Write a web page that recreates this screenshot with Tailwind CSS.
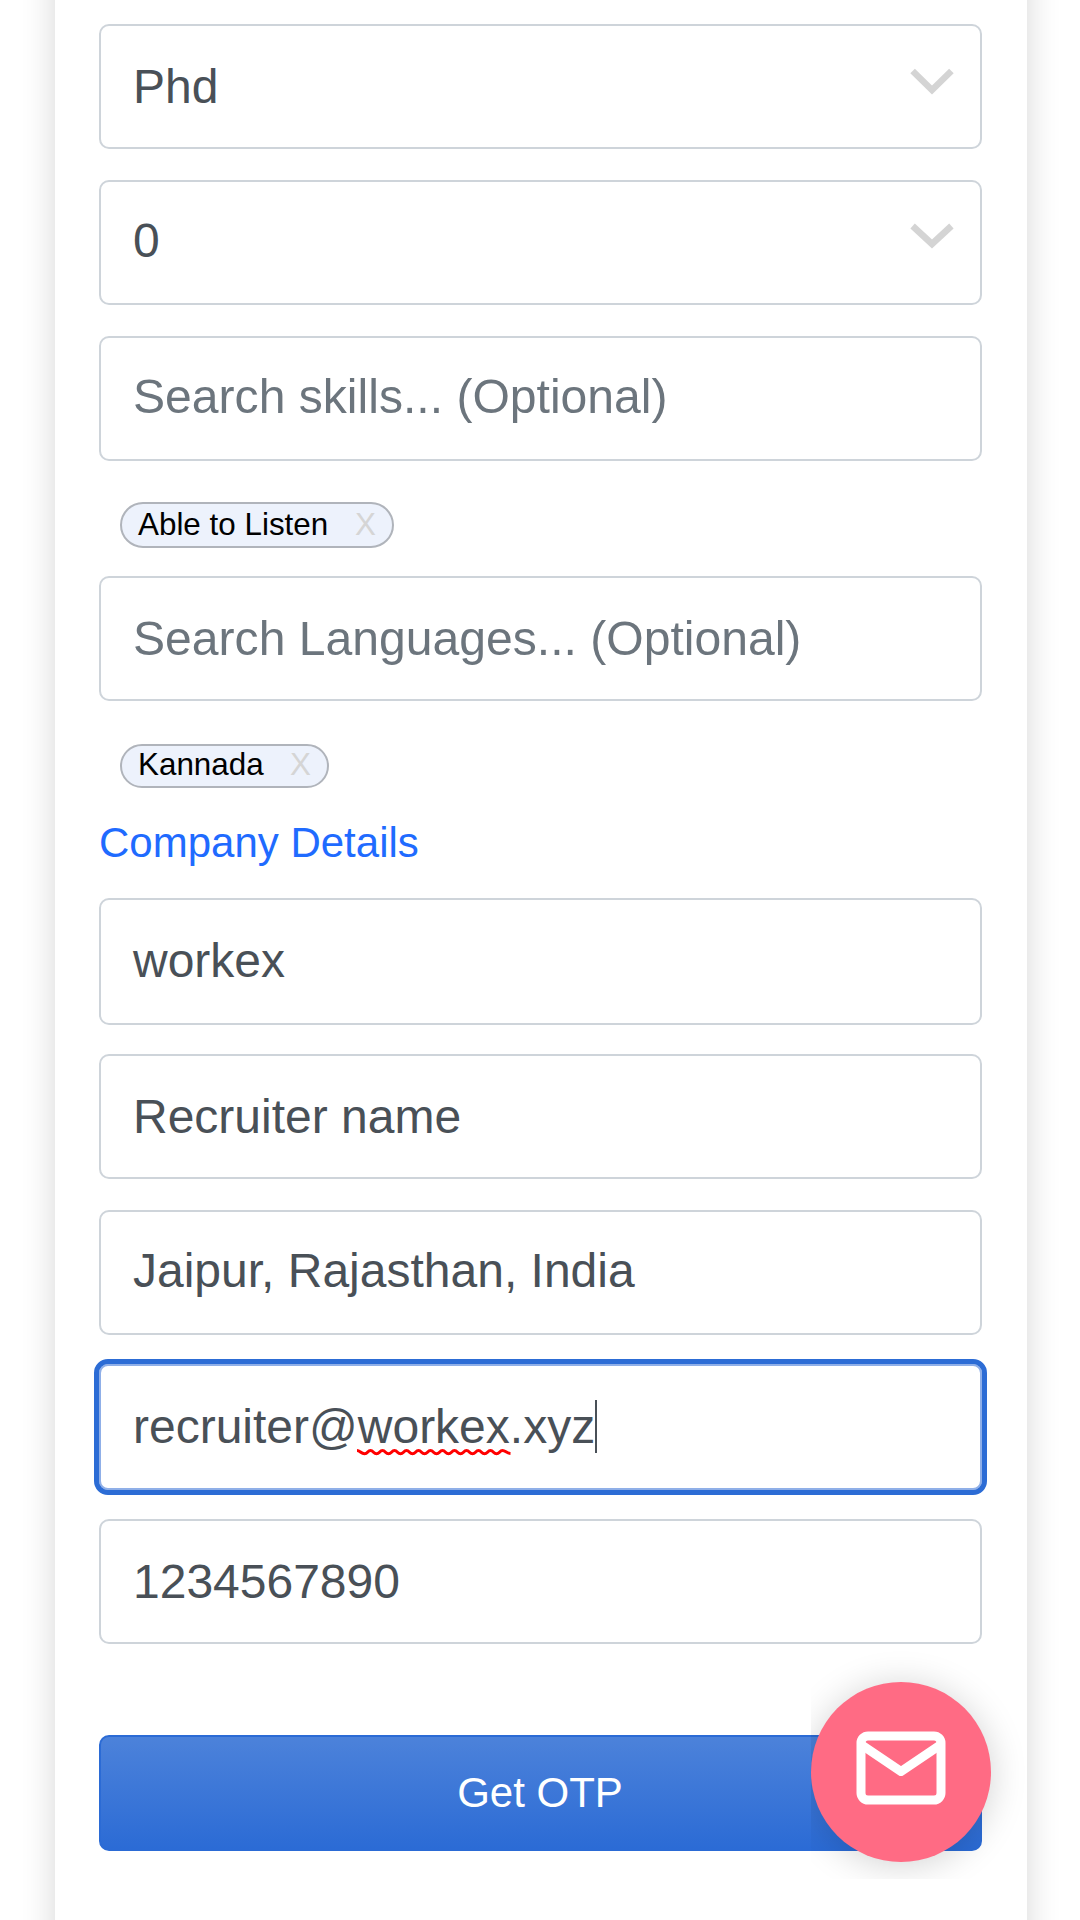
<!DOCTYPE html>
<html lang="en">
<head>
<meta charset="utf-8">
<title>Company Details</title>
<script src="https://cdn.jsdelivr.net/npm/@tailwindcss/browser@4"></script>
</head>
<body class="bg-white">
<div class="relative w-[1080px] h-[1920px] overflow-hidden bg-white font-['Liberation_Sans',Arial,sans-serif]">
  <main class="flex flex-col h-[2040px] -mt-[60px] ml-[55px] w-[972px] pt-[84px] pl-[43.5px] pr-[45.5px] bg-white shadow-[0_0_32px_rgba(0,0,0,0.16)]">
    <!-- Candidate details -->
    <div class="flex shrink-0 items-center justify-between h-[125px] pl-[32.5px] pr-[26px] border-2 border-[#ced4da] rounded-[10px] text-[48px] leading-none text-[#495057]">
      <span>Phd</span>
      <svg class="w-[44px] h-[28px] -mt-3" viewBox="0 0 44 28" fill="none" stroke="#d4d4d4" stroke-width="6.5"><path d="M2.6 4 L22 23 L41.4 4"/></svg>
    </div>
    <div class="flex shrink-0 items-center justify-between h-[125px] mt-[31px] pl-[32.5px] pr-[26px] pb-1 border-2 border-[#ced4da] rounded-[10px] text-[48px] leading-none text-[#495057]">
      <span>0</span>
      <svg class="w-[44px] h-[28px] -mt-2.5" viewBox="0 0 44 28" fill="none" stroke="#d4d4d4" stroke-width="6.5"><path d="M2.6 4 L22 22 L41.4 4"/></svg>
    </div>
    <div class="flex shrink-0 items-center h-[125px] mt-[31px] pl-[32.5px] pb-1 border-2 border-[#ced4da] rounded-[10px] text-[48.1px] leading-none text-[#6c757d]">Search skills... (Optional)</div>
    <div class="flex shrink-0 self-start items-center justify-between w-[273.5px] h-[45.5px] mt-[41px] ml-[21.5px] pl-[16px] pr-[15.5px] border-2 border-[#b0b4bb] rounded-full bg-[#edf2fc] text-[31.4px] leading-none text-black"><span>Able to Listen</span><span class="text-[#d5d5d5]">X</span></div>
    <div class="flex shrink-0 items-center h-[125px] mt-[28.5px] pl-[32.5px] border-2 border-[#ced4da] rounded-[10px] text-[48.1px] leading-none text-[#6c757d]">Search Languages... (Optional)</div>
    <div class="flex shrink-0 self-start items-center justify-between w-[208.5px] h-[43.5px] mt-[43px] ml-[21.5px] pl-[16px] pr-[15.5px] pb-0.5 border-2 border-[#b0b4bb] rounded-full bg-[#edf2fc] text-[31.4px] leading-none text-black"><span>Kannada</span><span class="text-[#d5d5d5]">X</span></div>

    <!-- Company details -->
    <h2 class="shrink-0 h-[63px] mt-[10.5px] mb-[37px] pl-[0.5px] text-[42px] leading-[90px] text-[#1f6bff]">Company Details</h2>
    <div class="flex shrink-0 items-center h-[127px] pl-[32.5px] pb-0.5 border-2 border-[#ced4da] rounded-[10px] text-[48px] leading-none text-[#495057]">workex</div>
    <div class="flex shrink-0 items-center h-[125px] mt-[29px] pl-[32.5px] border-2 border-[#ced4da] rounded-[10px] text-[48px] leading-none text-[#495057]">Recruiter name</div>
    <div class="flex shrink-0 items-center h-[125px] mt-[31px] pl-[32.5px] pb-1 border-2 border-[#ced4da] rounded-[10px] text-[48px] leading-none text-[#495057]">Jaipur, Rajasthan, India</div>
    <div class="flex shrink-0 items-center h-[126px] mt-[29px] pl-[32.5px] pb-px border-2 border-[#8fafe8] rounded-[9px] outline-[5px] outline-[#2c6cd5] text-[48px] leading-none text-[#495057]">
      <span>recruiter@</span><span class="relative">workex<svg class="absolute -left-px top-[45px] w-[154px] h-[9px]" viewBox="0 0 154 9" fill="none" stroke="#ff0000" stroke-width="3"><path d="M0 2.5 C3 2.5 4 5.8 7.5 5.8 S10.5 2.5 13.5 2.5 S16.5 5.8 19.5 5.8 S22.5 2.5 25.5 2.5 S28.5 5.8 31.5 5.8 S34.5 2.5 37.5 2.5 S40.5 5.8 43.5 5.8 S46.5 2.5 49.5 2.5 S52.5 5.8 55.5 5.8 S58.5 2.5 61.5 2.5 S64.5 5.8 67.5 5.8 S70.5 2.5 73.5 2.5 S76.5 5.8 79.5 5.8 S82.5 2.5 85.5 2.5 S88.5 5.8 91.5 5.8 S94.5 2.5 97.5 2.5 S100.5 5.8 103.5 5.8 S106.5 2.5 109.5 2.5 S112.5 5.8 115.5 5.8 S118.5 2.5 121.5 2.5 S124.5 5.8 127.5 5.8 S130.5 2.5 133.5 2.5 S136.5 5.8 139.5 5.8 S142.5 2.5 145.5 2.5 S149.5 5.3 153.5 5.5"/></svg></span><span>.xyz</span><span class="w-[2px] h-[53px] -mt-px bg-[#495057]"></span>
    </div>
    <div class="flex shrink-0 items-center h-[125px] mt-[29px] pl-[32.5px] border-2 border-[#ced4da] rounded-[10px] text-[48px] leading-none text-[#495057]">1234567890</div>
    <button class="flex shrink-0 items-center justify-center h-[116px] mt-[90.5px] border-2 border-[#2b6bd5] rounded-[10px] bg-linear-to-b from-[#4c82da] to-[#2b6bd5] text-[42px] leading-none text-white"><span class="pt-px">Get OTP</span></button>
  </main>

  <!-- Floating contact button; its frame clips the shadow on the left and bottom -->
  <div class="absolute left-[811px] top-[1640px] w-[240px] h-[239px] pt-[42px] overflow-hidden">
    <div class="flex items-center justify-center w-[180px] h-[180px] rounded-full bg-[#ff6b84] shadow-[0_3px_36px_rgba(0,0,0,0.18)]">
      <svg class="w-[90px] h-[74px] -mt-2" viewBox="0 0 90 74" fill="none" stroke="#ffffff" stroke-width="9"><rect x="5" y="5" width="80" height="64" rx="7"/><path stroke-linejoin="round" d="M6.5 14.5 L45 40.5 L83.5 14.5"/></svg>
    </div>
  </div>
</div>
</body>
</html>
